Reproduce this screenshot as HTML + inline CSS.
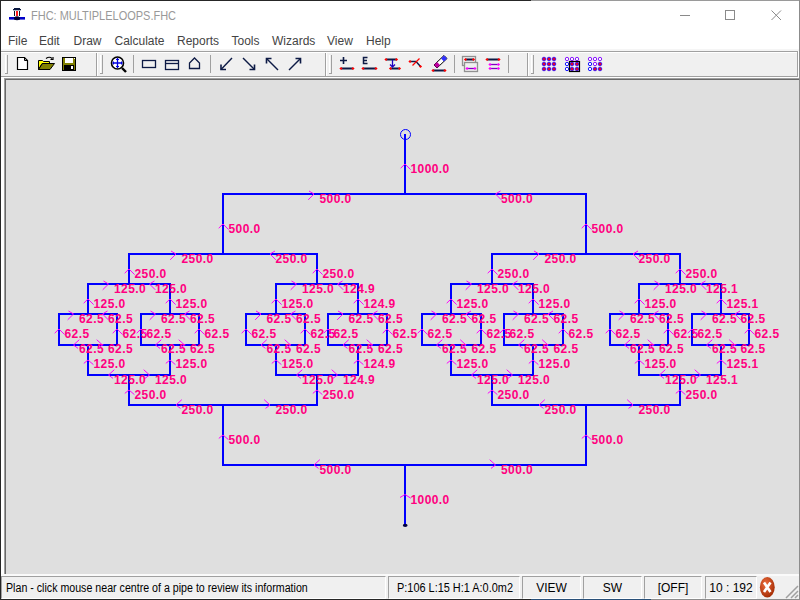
<!DOCTYPE html>
<html><head><meta charset="utf-8"><title>FHC</title>
<style>
html,body{margin:0;padding:0;}
body{width:800px;height:600px;overflow:hidden;position:relative;background:#fff;font-family:"Liberation Sans",sans-serif;}
.a{position:absolute;}
.t{position:absolute;white-space:nowrap;font-size:12px;line-height:14px;}
.menu{color:#444;top:34px;}
.sb{color:#000;top:581px;}
</style></head><body>
<!-- window borders -->
<div class="a" style="left:0;top:0;width:531px;height:1px;background:#262626"></div>
<div class="a" style="left:531px;top:0;width:269px;height:1px;background:#9a9a9a"></div>
<div class="a" style="left:0;top:0;width:1px;height:600px;background:#262626"></div>
<div class="a" style="left:799px;top:0;width:1px;height:600px;background:#8c8c8c"></div>

<!-- title bar -->
<svg class="a" style="left:0;top:0" width="30" height="24" viewBox="0 0 30 24">
 <rect x="14" y="8" width="6" height="1" fill="#0a1840"/>
 <rect x="13" y="9" width="8" height="1.3" fill="#0a1840"/>
 <rect x="14" y="11" width="1" height="5" fill="#0a1020"/>
 <rect x="19" y="11" width="1" height="5" fill="#0a1020"/>
 <rect x="16" y="11" width="2" height="5" fill="#ff1a1a"/>
 <rect x="9" y="17" width="16" height="2.6" fill="#0000c8"/>
 <path d="M14 17.5Q17 15 20 17.5V19.5Q17 21 14 19.5Z" fill="#000030"/>
</svg>
<div class="t" style="left:31px;top:9px;color:#999;transform:scaleX(0.915);transform-origin:0 0">FHC: MULTIPLELOOPS.FHC</div>
<div class="a" style="left:680px;top:15px;width:10px;height:1px;background:#8a8a8a"></div>
<div class="a" style="left:725px;top:10px;width:8px;height:8px;border:1px solid #8a8a8a"></div>
<svg class="a" style="left:770px;top:9px" width="13" height="13" viewBox="0 0 13 13"><path d="M1.5 1.5L11 11M11 1.5L1.5 11" stroke="#8a8a8a" stroke-width="1"/></svg>

<!-- menu -->
<div class="t menu" style="left:8px">File</div>
<div class="t menu" style="left:39px">Edit</div>
<div class="t menu" style="left:73.5px">Draw</div>
<div class="t menu" style="left:114.5px">Calculate</div>
<div class="t menu" style="left:177px">Reports</div>
<div class="t menu" style="left:231.5px">Tools</div>
<div class="t menu" style="left:272px">Wizards</div>
<div class="t menu" style="left:327px">View</div>
<div class="t menu" style="left:366px">Help</div>

<!-- toolbar -->
<div class="a" style="left:1px;top:49px;width:798px;height:2px;background:#f5f5f5"></div>
<div class="a" style="left:1px;top:51px;width:797px;height:1px;background:#a0a0a0"></div>
<div class="a" style="left:1px;top:52px;width:797px;height:24px;background:#f0f0f0;border-top:1px solid #fff"></div>
<div class="a" style="left:797px;top:51px;width:1px;height:26px;background:#a0a0a0"></div>
<div class="a" style="left:1px;top:76px;width:797px;height:1px;background:#a0a0a0"></div>
<div class="a" style="left:1px;top:77px;width:798px;height:1px;background:#fff"></div>
<svg class="a" style="left:0;top:48px" width="800" height="30" viewBox="0 48 800 30">
<rect x="5" y="55" width="1" height="18" fill="#fff"/><rect x="7" y="55" width="1" height="19" fill="#a0a0a0"/><rect x="5" y="73" width="3" height="1" fill="#a0a0a0"/>
<rect x="100" y="55" width="1" height="18" fill="#fff"/><rect x="102" y="55" width="1" height="19" fill="#a0a0a0"/><rect x="100" y="73" width="3" height="1" fill="#a0a0a0"/>
<rect x="329" y="55" width="1" height="18" fill="#fff"/><rect x="331" y="55" width="1" height="19" fill="#a0a0a0"/><rect x="329" y="73" width="3" height="1" fill="#a0a0a0"/>
<rect x="531" y="55" width="1" height="18" fill="#fff"/><rect x="533" y="55" width="1" height="19" fill="#a0a0a0"/><rect x="531" y="73" width="3" height="1" fill="#a0a0a0"/>
<rect x="96" y="53" width="1" height="23" fill="#a0a0a0"/><rect x="97" y="53" width="1" height="23" fill="#fff"/>
<rect x="325" y="53" width="1" height="23" fill="#a0a0a0"/><rect x="326" y="53" width="1" height="23" fill="#fff"/>
<rect x="527" y="53" width="1" height="23" fill="#a0a0a0"/><rect x="528" y="53" width="1" height="23" fill="#fff"/>
<rect x="133" y="55" width="1" height="18" fill="#a0a0a0"/>
<rect x="210" y="55" width="1" height="18" fill="#a0a0a0"/>
<rect x="454" y="55" width="1" height="18" fill="#a0a0a0"/>
<rect x="508" y="55" width="1" height="18" fill="#a0a0a0"/>
<path d="M17.5 57.5H24.5L27.5 60.5V69.5H17.5Z" fill="#fff" stroke="#000" stroke-width="1.2"/><path d="M24.5 58V60.5H27" stroke="#000" stroke-width="1" fill="none"/>
<path d="M38.5 60.5H42.5L43.5 61.5H49.5V63.5H42L38.5 69.5Z" fill="#ffff00" stroke="#000" stroke-width="1"/><path d="M38.5 69.5L42.5 63.5H54.5L50 69.5Z" fill="#808000" stroke="#000" stroke-width="1"/><path d="M46 58.5Q49.5 56 52 58.5" stroke="#000" fill="none" stroke-width="1.2"/><path d="M50.5 59.5H53V57" stroke="#000" fill="none" stroke-width="1.2"/>
<rect x="62" y="57" width="14" height="14" fill="#000"/><rect x="63" y="58" width="12" height="12" fill="#808000"/><rect x="65" y="58" width="8" height="5" fill="#fff"/><rect x="64" y="65" width="10" height="5" fill="#000"/><rect x="71" y="66" width="2" height="3" fill="#fff"/><rect x="74" y="58" width="1" height="1" fill="#fff"/>
<circle cx="117.5" cy="63" r="6" fill="#fff" stroke="#000" stroke-width="1.6"/><path d="M122 68L126 72" stroke="#000" stroke-width="2.4"/><path d="M117.5 58V68M112.5 63H122.5" stroke="#0000e0" stroke-width="1.3"/><path d="M116 59.5H119M116 66.5H119M113.5 61.5V64.5M121.5 61.5V64.5" stroke="#0000e0" stroke-width="1"/>
<rect x="142.5" y="60.5" width="13" height="7" fill="none" stroke="#0d1a45" stroke-width="1.3"/>
<rect x="165.5" y="60.5" width="13" height="9" fill="none" stroke="#0d1a45" stroke-width="1.3"/><path d="M165 63.5H179" stroke="#0d1a45" stroke-width="1.3"/>
<path d="M189.5 68.5V63L194.5 58L199.5 63V68.5Z" fill="none" stroke="#0d1a45" stroke-width="1.3"/>
<path d="M232 58L221 69.5" stroke="#0d1a45" stroke-width="1.4"/><path d="M221 64.5V69.5H226" stroke="#0d1a45" stroke-width="1.6" fill="none"/>
<path d="M243 58L254.5 69.5" stroke="#0d1a45" stroke-width="1.4"/><path d="M254.5 64.5V69.5H249.5" stroke="#0d1a45" stroke-width="1.6" fill="none"/>
<path d="M278 70L266.5 58.5" stroke="#0d1a45" stroke-width="1.4"/><path d="M266.5 63.5V58.5H271.5" stroke="#0d1a45" stroke-width="1.6" fill="none"/>
<path d="M289 70L300.5 58.5" stroke="#0d1a45" stroke-width="1.4"/><path d="M300.5 63.5V58.5H295.5" stroke="#0d1a45" stroke-width="1.6" fill="none"/>
<path d="M340 60.5H347M343.5 57V64" stroke="#0d1a45" stroke-width="1.6"/><rect x="341" y="67.5" width="12" height="2" fill="#0d1a45"/><path d="M339.4 68.5L341 66.9L342.6 68.5L341 70.1Z" fill="#ff0000"/><path d="M351.4 68.5L353 66.9L354.6 68.5L353 70.1Z" fill="#ff0000"/>
<path d="M367.5 57.5H363.5V63.5H367.5M363.5 60.5H367" stroke="#0d1a45" stroke-width="1.5" fill="none"/><rect x="363" y="67.5" width="13" height="2" fill="#0d1a45"/><path d="M361.4 68.5L363 66.9L364.6 68.5L363 70.1Z" fill="#ff0000"/><path d="M374.4 68.5L376 66.9L377.6 68.5L376 70.1Z" fill="#ff0000"/>
<rect x="386" y="58.5" width="10.5" height="2" fill="#0d1a45"/><path d="M384.4 59.5L386 57.9L387.6 59.5L386 61.1Z" fill="#ff0000"/><path d="M394.9 59.5L396.5 57.9L398.1 59.5L396.5 61.1Z" fill="#ff0000"/><rect x="390.5" y="67.5" width="9.0" height="2" fill="#0d1a45"/><path d="M388.9 68.5L390.5 66.9L392.1 68.5L390.5 70.1Z" fill="#ff0000"/><path d="M397.9 68.5L399.5 66.9L401.1 68.5L399.5 70.1Z" fill="#ff0000"/><path d="M392.5 60V67M390 64.5L392.5 67L395 64.5" stroke="#2000c0" stroke-width="1.3" fill="none"/>
<path d="M410 61.5H416L420.5 66.5" stroke="#0d1a45" stroke-width="1.4" fill="none"/><path d="M408.4 61.5L410 59.9L411.6 61.5L410 63.1Z" fill="#ff0000"/><path d="M418.9 66.5L420.5 64.9L422.1 66.5L420.5 68.1Z" fill="#ff0000"/><path d="M412.5 65.5L419.5 58.5" stroke="#ff0000" stroke-width="1.2"/>
<path d="M437 68L434 65L444 55.5L447 58.5Z" fill="#fff" stroke="#000" stroke-width="1"/><path d="M441 58.5L444 55.5L447 58.5L444 61.5Z" fill="#3030ff"/><path d="M437 68L434 65L437 62L440 65Z" fill="#c000a0"/><rect x="433" y="69.5" width="12" height="2" fill="#0d1a45"/><path d="M431.4 70.5L433 68.9L434.6 70.5L433 72.1Z" fill="#ff0000"/><path d="M443.4 70.5L445 68.9L446.6 70.5L445 72.1Z" fill="#ff0000"/>
<rect x="462.5" y="56.5" width="13" height="9" fill="#f0f0f0" stroke="#909090" stroke-width="1.3"/><rect x="465.5" y="58.5" width="8.0" height="2" fill="#0d1a45"/><path d="M463.9 59.5L465.5 57.9L467.1 59.5L465.5 61.1Z" fill="#ff0000"/><path d="M471.9 59.5L473.5 57.9L475.1 59.5L473.5 61.1Z" fill="#ff0000"/><rect x="464.5" y="62.5" width="13" height="9" fill="#f0f0f0" stroke="#909090" stroke-width="1.3"/><rect x="467" y="67.85" width="8" height="1.3" fill="#8000c0"/><path d="M465.4 68.5L467 66.9L468.6 68.5L467 70.1Z" fill="#ff00ff"/><path d="M473.4 68.5L475 66.9L476.6 68.5L475 70.1Z" fill="#ff00ff"/>
<rect x="487" y="58.5" width="12" height="2" fill="#0d1a45"/><path d="M485.4 59.5L487 57.9L488.6 59.5L487 61.1Z" fill="#ff0000"/><path d="M497.4 59.5L499 57.9L500.6 59.5L499 61.1Z" fill="#ff0000"/><rect x="490" y="63.85" width="8.5" height="1.3" fill="#8000c0"/><path d="M488.4 64.5L490 62.9L491.6 64.5L490 66.1Z" fill="#ff00ff"/><path d="M496.9 64.5L498.5 62.9L500.1 64.5L498.5 66.1Z" fill="#ff00ff"/><rect x="490" y="67.85" width="8.5" height="1.3" fill="#8000c0"/><path d="M488.4 68.5L490 66.9L491.6 68.5L490 70.1Z" fill="#ff00ff"/><path d="M496.9 68.5L498.5 66.9L500.1 68.5L498.5 70.1Z" fill="#ff00ff"/>
<circle cx="544" cy="59" r="1.8" fill="#e00030" stroke="#2000ff" stroke-width="0.8"/>
<circle cx="549" cy="59" r="1.8" fill="#e00030" stroke="#2000ff" stroke-width="0.8"/>
<circle cx="554" cy="59" r="1.8" fill="#e00030" stroke="#2000ff" stroke-width="0.8"/>
<circle cx="544" cy="64" r="1.8" fill="#e00030" stroke="#2000ff" stroke-width="0.8"/>
<circle cx="549" cy="64" r="1.8" fill="#e00030" stroke="#2000ff" stroke-width="0.8"/>
<circle cx="554" cy="64" r="1.8" fill="#e00030" stroke="#2000ff" stroke-width="0.8"/>
<circle cx="544" cy="69" r="1.8" fill="#e00030" stroke="#2000ff" stroke-width="0.8"/>
<circle cx="549" cy="69" r="1.8" fill="#e00030" stroke="#2000ff" stroke-width="0.8"/>
<circle cx="554" cy="69" r="1.8" fill="#e00030" stroke="#2000ff" stroke-width="0.8"/>
<circle cx="567" cy="59" r="1.7" fill="#f8f8ff" stroke="#8000ff" stroke-width="0.9"/>
<circle cx="572" cy="59" r="1.7" fill="#f8f8ff" stroke="#8000ff" stroke-width="0.9"/>
<circle cx="577" cy="59" r="1.7" fill="#f8f8ff" stroke="#8000ff" stroke-width="0.9"/>
<circle cx="567" cy="64" r="1.7" fill="#f8f8ff" stroke="#0000ff" stroke-width="0.9"/>
<circle cx="572" cy="64" r="1.8" fill="#e00030" stroke="#2000ff" stroke-width="0.8"/>
<circle cx="577" cy="64" r="1.8" fill="#e00030" stroke="#2000ff" stroke-width="0.8"/>
<circle cx="567" cy="69" r="1.7" fill="#f8f8ff" stroke="#0000ff" stroke-width="0.9"/>
<circle cx="572" cy="69" r="1.8" fill="#e00030" stroke="#2000ff" stroke-width="0.8"/>
<circle cx="577" cy="69" r="1.8" fill="#e00030" stroke="#2000ff" stroke-width="0.8"/>
<rect x="569.5" y="61.5" width="10" height="10" fill="none" stroke="#000" stroke-width="1.2"/>
<circle cx="590" cy="59" r="1.7" fill="#f8f8ff" stroke="#8000ff" stroke-width="0.9"/>
<circle cx="595" cy="59" r="1.7" fill="#f8f8ff" stroke="#8000ff" stroke-width="0.9"/>
<circle cx="600" cy="59" r="1.7" fill="#f8f8ff" stroke="#8000ff" stroke-width="0.9"/>
<circle cx="590" cy="64" r="1.7" fill="#f8f8ff" stroke="#0000ff" stroke-width="0.9"/>
<circle cx="595" cy="64" r="1.7" fill="#f8f8ff" stroke="#8000ff" stroke-width="0.9"/>
<circle cx="600" cy="64" r="1.8" fill="#e00030" stroke="#2000ff" stroke-width="0.8"/>
<circle cx="590" cy="69" r="1.7" fill="#f8f8ff" stroke="#0000ff" stroke-width="0.9"/>
<circle cx="595" cy="69" r="1.8" fill="#e00030" stroke="#2000ff" stroke-width="0.8"/>
<circle cx="600" cy="69" r="1.8" fill="#e00030" stroke="#2000ff" stroke-width="0.8"/>
</svg>

<!-- canvas -->
<div class="a" style="left:1px;top:78px;width:3px;height:496px;background:#fff"></div>
<div class="a" style="left:4px;top:78px;width:795px;height:1px;background:#a0a0a0"></div>
<div class="a" style="left:4px;top:78px;width:1px;height:496px;background:#a0a0a0"></div>
<div class="a" style="left:5px;top:79px;width:794px;height:1px;background:#696969"></div>
<div class="a" style="left:5px;top:79px;width:1px;height:495px;background:#696969"></div>
<div class="a" style="left:6px;top:80px;width:793px;height:494px;background:#dfdfdf"></div>
<svg width="793" height="494" viewBox="6 80 793 494" style="position:absolute;left:6px;top:80px">
<g stroke="#0000ff" stroke-width="2" shape-rendering="crispEdges" fill="none">
<rect x="404" y="134" width="2" height="61" fill="#0000ff" stroke="none"/>
<rect x="222" y="193" width="365" height="2" fill="#0000ff" stroke="none"/>
<rect x="404" y="464" width="2" height="60" fill="#0000ff" stroke="none"/>
<rect x="222" y="464" width="365" height="2" fill="#0000ff" stroke="none"/>
<rect x="222" y="194" width="2" height="60" fill="#0000ff" stroke="none"/>
<rect x="222" y="405" width="2" height="60" fill="#0000ff" stroke="none"/>
<rect x="128" y="253" width="190" height="2" fill="#0000ff" stroke="none"/>
<rect x="128" y="404" width="190" height="2" fill="#0000ff" stroke="none"/>
<rect x="128" y="254" width="2" height="30" fill="#0000ff" stroke="none"/>
<rect x="128" y="375" width="2" height="30" fill="#0000ff" stroke="none"/>
<rect x="87" y="283" width="84" height="2" fill="#0000ff" stroke="none"/>
<rect x="87" y="374" width="84" height="2" fill="#0000ff" stroke="none"/>
<rect x="87" y="284" width="2" height="30" fill="#0000ff" stroke="none"/>
<rect x="87" y="345" width="2" height="30" fill="#0000ff" stroke="none"/>
<rect x="58" y="313" width="60" height="2" fill="#0000ff" stroke="none"/>
<rect x="58" y="344" width="60" height="2" fill="#0000ff" stroke="none"/>
<rect x="58" y="314" width="2" height="31" fill="#0000ff" stroke="none"/>
<rect x="116" y="314" width="2" height="31" fill="#0000ff" stroke="none"/>
<rect x="169" y="284" width="2" height="30" fill="#0000ff" stroke="none"/>
<rect x="169" y="345" width="2" height="30" fill="#0000ff" stroke="none"/>
<rect x="140" y="313" width="60" height="2" fill="#0000ff" stroke="none"/>
<rect x="140" y="344" width="60" height="2" fill="#0000ff" stroke="none"/>
<rect x="140" y="314" width="2" height="31" fill="#0000ff" stroke="none"/>
<rect x="198" y="314" width="2" height="31" fill="#0000ff" stroke="none"/>
<rect x="316" y="254" width="2" height="30" fill="#0000ff" stroke="none"/>
<rect x="316" y="375" width="2" height="30" fill="#0000ff" stroke="none"/>
<rect x="275" y="283" width="84" height="2" fill="#0000ff" stroke="none"/>
<rect x="275" y="374" width="84" height="2" fill="#0000ff" stroke="none"/>
<rect x="275" y="284" width="2" height="30" fill="#0000ff" stroke="none"/>
<rect x="275" y="345" width="2" height="30" fill="#0000ff" stroke="none"/>
<rect x="245" y="313" width="61" height="2" fill="#0000ff" stroke="none"/>
<rect x="245" y="344" width="61" height="2" fill="#0000ff" stroke="none"/>
<rect x="245" y="314" width="2" height="31" fill="#0000ff" stroke="none"/>
<rect x="304" y="314" width="2" height="31" fill="#0000ff" stroke="none"/>
<rect x="357" y="284" width="2" height="30" fill="#0000ff" stroke="none"/>
<rect x="357" y="345" width="2" height="30" fill="#0000ff" stroke="none"/>
<rect x="327" y="313" width="61" height="2" fill="#0000ff" stroke="none"/>
<rect x="327" y="344" width="61" height="2" fill="#0000ff" stroke="none"/>
<rect x="327" y="314" width="2" height="31" fill="#0000ff" stroke="none"/>
<rect x="386" y="314" width="2" height="31" fill="#0000ff" stroke="none"/>
<rect x="585" y="194" width="2" height="60" fill="#0000ff" stroke="none"/>
<rect x="585" y="405" width="2" height="60" fill="#0000ff" stroke="none"/>
<rect x="491" y="253" width="190" height="2" fill="#0000ff" stroke="none"/>
<rect x="491" y="404" width="190" height="2" fill="#0000ff" stroke="none"/>
<rect x="491" y="254" width="2" height="30" fill="#0000ff" stroke="none"/>
<rect x="491" y="375" width="2" height="30" fill="#0000ff" stroke="none"/>
<rect x="450" y="283" width="84" height="2" fill="#0000ff" stroke="none"/>
<rect x="450" y="374" width="84" height="2" fill="#0000ff" stroke="none"/>
<rect x="450" y="284" width="2" height="30" fill="#0000ff" stroke="none"/>
<rect x="450" y="345" width="2" height="30" fill="#0000ff" stroke="none"/>
<rect x="421" y="313" width="61" height="2" fill="#0000ff" stroke="none"/>
<rect x="421" y="344" width="61" height="2" fill="#0000ff" stroke="none"/>
<rect x="421" y="314" width="2" height="31" fill="#0000ff" stroke="none"/>
<rect x="480" y="314" width="2" height="31" fill="#0000ff" stroke="none"/>
<rect x="532" y="284" width="2" height="30" fill="#0000ff" stroke="none"/>
<rect x="532" y="345" width="2" height="30" fill="#0000ff" stroke="none"/>
<rect x="503" y="313" width="61" height="2" fill="#0000ff" stroke="none"/>
<rect x="503" y="344" width="61" height="2" fill="#0000ff" stroke="none"/>
<rect x="503" y="314" width="2" height="31" fill="#0000ff" stroke="none"/>
<rect x="562" y="314" width="2" height="31" fill="#0000ff" stroke="none"/>
<rect x="679" y="254" width="2" height="30" fill="#0000ff" stroke="none"/>
<rect x="679" y="375" width="2" height="30" fill="#0000ff" stroke="none"/>
<rect x="638" y="283" width="84" height="2" fill="#0000ff" stroke="none"/>
<rect x="638" y="374" width="84" height="2" fill="#0000ff" stroke="none"/>
<rect x="638" y="284" width="2" height="30" fill="#0000ff" stroke="none"/>
<rect x="638" y="345" width="2" height="30" fill="#0000ff" stroke="none"/>
<rect x="609" y="313" width="60" height="2" fill="#0000ff" stroke="none"/>
<rect x="609" y="344" width="60" height="2" fill="#0000ff" stroke="none"/>
<rect x="609" y="314" width="2" height="31" fill="#0000ff" stroke="none"/>
<rect x="667" y="314" width="2" height="31" fill="#0000ff" stroke="none"/>
<rect x="720" y="284" width="2" height="30" fill="#0000ff" stroke="none"/>
<rect x="720" y="345" width="2" height="30" fill="#0000ff" stroke="none"/>
<rect x="691" y="313" width="59" height="2" fill="#0000ff" stroke="none"/>
<rect x="691" y="344" width="59" height="2" fill="#0000ff" stroke="none"/>
<rect x="691" y="314" width="2" height="31" fill="#0000ff" stroke="none"/>
<rect x="748" y="314" width="2" height="31" fill="#0000ff" stroke="none"/>
</g>
<circle cx="405.5" cy="134.5" r="5" fill="none" stroke="#0000ff" stroke-width="1"/>
<ellipse cx="405.2" cy="525.3" rx="2.4" ry="1.6" fill="#000040"/>
<g fill="#ff0080" font-family="Liberation Sans, sans-serif" font-weight="bold" font-size="12" letter-spacing="0.4">
<text x="319.5" y="203.0">500.0</text>
<text x="501.0" y="203.0">500.0</text>
<text x="410.5" y="173.0">1000.0</text>
<text x="319.5" y="474.0">500.0</text>
<text x="501.0" y="474.0">500.0</text>
<text x="410.5" y="503.5">1000.0</text>
<text x="228.5" y="233.0">500.0</text>
<text x="228.5" y="444.0">500.0</text>
<text x="181.5" y="263.0">250.0</text>
<text x="275.5" y="263.0">250.0</text>
<text x="181.5" y="414.0">250.0</text>
<text x="275.5" y="414.0">250.0</text>
<text x="134.5" y="278.0">250.0</text>
<text x="134.5" y="399.0">250.0</text>
<text x="114.0" y="293.0">125.0</text>
<text x="155.0" y="293.0">125.0</text>
<text x="114.0" y="384.0">125.0</text>
<text x="155.0" y="384.0">125.0</text>
<text x="93.5" y="308.0">125.0</text>
<text x="93.5" y="368.0">125.0</text>
<text x="79.0" y="323.0">62.5</text>
<text x="108.0" y="323.0">62.5</text>
<text x="79.0" y="353.0">62.5</text>
<text x="108.0" y="353.0">62.5</text>
<text x="64.5" y="338.0">62.5</text>
<text x="122.5" y="338.0">62.5</text>
<text x="175.5" y="308.0">125.0</text>
<text x="175.5" y="368.0">125.0</text>
<text x="161.0" y="323.0">62.5</text>
<text x="190.0" y="323.0">62.5</text>
<text x="161.0" y="353.0">62.5</text>
<text x="190.0" y="353.0">62.5</text>
<text x="146.5" y="338.0">62.5</text>
<text x="204.5" y="338.0">62.5</text>
<text x="322.5" y="278.0">250.0</text>
<text x="322.5" y="399.0">250.0</text>
<text x="302.0" y="293.0">125.0</text>
<text x="343.0" y="293.0">124.9</text>
<text x="302.0" y="384.0">125.0</text>
<text x="343.0" y="384.0">124.9</text>
<text x="281.5" y="308.0">125.0</text>
<text x="281.5" y="368.0">125.0</text>
<text x="266.5" y="323.0">62.5</text>
<text x="296.0" y="323.0">62.5</text>
<text x="266.5" y="353.0">62.5</text>
<text x="296.0" y="353.0">62.5</text>
<text x="251.5" y="338.0">62.5</text>
<text x="310.5" y="338.0">62.5</text>
<text x="363.5" y="308.0">124.9</text>
<text x="363.5" y="368.0">124.9</text>
<text x="348.5" y="323.0">62.5</text>
<text x="378.0" y="323.0">62.5</text>
<text x="348.5" y="353.0">62.5</text>
<text x="378.0" y="353.0">62.5</text>
<text x="333.5" y="338.0">62.5</text>
<text x="392.5" y="338.0">62.5</text>
<text x="591.5" y="233.0">500.0</text>
<text x="591.5" y="444.0">500.0</text>
<text x="544.5" y="263.0">250.0</text>
<text x="638.5" y="263.0">250.0</text>
<text x="544.5" y="414.0">250.0</text>
<text x="638.5" y="414.0">250.0</text>
<text x="497.5" y="278.0">250.0</text>
<text x="497.5" y="399.0">250.0</text>
<text x="477.0" y="293.0">125.0</text>
<text x="518.0" y="293.0">125.0</text>
<text x="477.0" y="384.0">125.0</text>
<text x="518.0" y="384.0">125.0</text>
<text x="456.5" y="308.0">125.0</text>
<text x="456.5" y="368.0">125.0</text>
<text x="442.0" y="323.0">62.5</text>
<text x="471.5" y="323.0">62.5</text>
<text x="442.0" y="353.0">62.5</text>
<text x="471.5" y="353.0">62.5</text>
<text x="427.5" y="338.0">62.5</text>
<text x="486.5" y="338.0">62.5</text>
<text x="538.5" y="308.0">125.0</text>
<text x="538.5" y="368.0">125.0</text>
<text x="524.0" y="323.0">62.5</text>
<text x="553.5" y="323.0">62.5</text>
<text x="524.0" y="353.0">62.5</text>
<text x="553.5" y="353.0">62.5</text>
<text x="509.5" y="338.0">62.5</text>
<text x="568.5" y="338.0">62.5</text>
<text x="685.5" y="278.0">250.0</text>
<text x="685.5" y="399.0">250.0</text>
<text x="665.0" y="293.0">125.0</text>
<text x="706.0" y="293.0">125.1</text>
<text x="665.0" y="384.0">125.0</text>
<text x="706.0" y="384.0">125.1</text>
<text x="644.5" y="308.0">125.0</text>
<text x="644.5" y="368.0">125.0</text>
<text x="630.0" y="323.0">62.5</text>
<text x="659.0" y="323.0">62.5</text>
<text x="630.0" y="353.0">62.5</text>
<text x="659.0" y="353.0">62.5</text>
<text x="615.5" y="338.0">62.5</text>
<text x="673.5" y="338.0">62.5</text>
<text x="726.5" y="308.0">125.1</text>
<text x="726.5" y="368.0">125.1</text>
<text x="712.0" y="323.0">62.5</text>
<text x="740.5" y="323.0">62.5</text>
<text x="712.0" y="353.0">62.5</text>
<text x="740.5" y="353.0">62.5</text>
<text x="697.5" y="338.0">62.5</text>
<text x="754.5" y="338.0">62.5</text>
</g>
<g stroke="#ff00ff" stroke-width="1" fill="none">
<polyline points="309.0,191.0 314.0,194.0 308.2,199.8"/>
<polyline points="500.5,191.0 495.5,194.0 501.3,199.8"/>
<polyline points="400.7,168.2 405.0,164.0 410.6,169.6"/>
<polyline points="319.8,459.7 314.0,465.0 318.5,468.4"/>
<polyline points="489.7,459.7 495.5,465.0 491.0,468.4"/>
<polyline points="400.0,497.5 405.0,494.5 410.8,498.2"/>
<polyline points="218.7,228.2 223.0,224.0 228.6,229.6"/>
<polyline points="218.8,438.4 223.0,435.0 228.4,439.6"/>
<polyline points="171.0,251.0 176.0,254.0 170.2,259.8"/>
<polyline points="275.0,251.0 270.0,254.0 275.8,259.8"/>
<polyline points="181.8,399.7 176.0,405.0 180.5,408.4"/>
<polyline points="264.2,399.7 270.0,405.0 265.5,408.4"/>
<polyline points="124.7,273.2 129.0,269.0 134.6,274.6"/>
<polyline points="124.8,393.4 129.0,390.0 134.4,394.6"/>
<polyline points="103.5,281.0 108.5,284.0 102.7,289.8"/>
<polyline points="154.5,281.0 149.5,284.0 155.3,289.8"/>
<polyline points="114.3,369.7 108.5,375.0 113.0,378.4"/>
<polyline points="143.7,369.7 149.5,375.0 145.0,378.4"/>
<polyline points="83.7,303.2 88.0,299.0 93.6,304.6"/>
<polyline points="83.8,363.4 88.0,360.0 93.4,364.6"/>
<polyline points="68.5,311.0 73.5,314.0 67.7,319.8"/>
<polyline points="107.5,311.0 102.5,314.0 108.3,319.8"/>
<polyline points="79.3,339.7 73.5,345.0 78.0,348.4"/>
<polyline points="96.7,339.7 102.5,345.0 98.0,348.4"/>
<polyline points="54.7,333.2 59.0,329.0 64.6,334.6"/>
<polyline points="112.7,333.2 117.0,329.0 122.6,334.6"/>
<polyline points="165.7,303.2 170.0,299.0 175.6,304.6"/>
<polyline points="165.8,363.4 170.0,360.0 175.4,364.6"/>
<polyline points="150.5,311.0 155.5,314.0 149.7,319.8"/>
<polyline points="189.5,311.0 184.5,314.0 190.3,319.8"/>
<polyline points="161.3,339.7 155.5,345.0 160.0,348.4"/>
<polyline points="178.7,339.7 184.5,345.0 180.0,348.4"/>
<polyline points="136.7,333.2 141.0,329.0 146.6,334.6"/>
<polyline points="194.7,333.2 199.0,329.0 204.6,334.6"/>
<polyline points="312.7,273.2 317.0,269.0 322.6,274.6"/>
<polyline points="312.8,393.4 317.0,390.0 322.4,394.6"/>
<polyline points="291.5,281.0 296.5,284.0 290.7,289.8"/>
<polyline points="342.5,281.0 337.5,284.0 343.3,289.8"/>
<polyline points="302.3,369.7 296.5,375.0 301.0,378.4"/>
<polyline points="331.7,369.7 337.5,375.0 333.0,378.4"/>
<polyline points="271.7,303.2 276.0,299.0 281.6,304.6"/>
<polyline points="271.8,363.4 276.0,360.0 281.4,364.6"/>
<polyline points="256.0,311.0 261.0,314.0 255.2,319.8"/>
<polyline points="295.5,311.0 290.5,314.0 296.3,319.8"/>
<polyline points="266.8,339.7 261.0,345.0 265.5,348.4"/>
<polyline points="284.7,339.7 290.5,345.0 286.0,348.4"/>
<polyline points="241.7,333.2 246.0,329.0 251.6,334.6"/>
<polyline points="300.7,333.2 305.0,329.0 310.6,334.6"/>
<polyline points="353.7,303.2 358.0,299.0 363.6,304.6"/>
<polyline points="353.8,363.4 358.0,360.0 363.4,364.6"/>
<polyline points="338.0,311.0 343.0,314.0 337.2,319.8"/>
<polyline points="377.5,311.0 372.5,314.0 378.3,319.8"/>
<polyline points="348.8,339.7 343.0,345.0 347.5,348.4"/>
<polyline points="366.7,339.7 372.5,345.0 368.0,348.4"/>
<polyline points="323.7,333.2 328.0,329.0 333.6,334.6"/>
<polyline points="382.7,333.2 387.0,329.0 392.6,334.6"/>
<polyline points="581.7,228.2 586.0,224.0 591.6,229.6"/>
<polyline points="581.8,438.4 586.0,435.0 591.4,439.6"/>
<polyline points="534.0,251.0 539.0,254.0 533.2,259.8"/>
<polyline points="638.0,251.0 633.0,254.0 638.8,259.8"/>
<polyline points="544.8,399.7 539.0,405.0 543.5,408.4"/>
<polyline points="627.2,399.7 633.0,405.0 628.5,408.4"/>
<polyline points="487.7,273.2 492.0,269.0 497.6,274.6"/>
<polyline points="487.8,393.4 492.0,390.0 497.4,394.6"/>
<polyline points="466.5,281.0 471.5,284.0 465.7,289.8"/>
<polyline points="517.5,281.0 512.5,284.0 518.3,289.8"/>
<polyline points="477.3,369.7 471.5,375.0 476.0,378.4"/>
<polyline points="506.7,369.7 512.5,375.0 508.0,378.4"/>
<polyline points="446.7,303.2 451.0,299.0 456.6,304.6"/>
<polyline points="446.8,363.4 451.0,360.0 456.4,364.6"/>
<polyline points="431.5,311.0 436.5,314.0 430.7,319.8"/>
<polyline points="471.0,311.0 466.0,314.0 471.8,319.8"/>
<polyline points="442.3,339.7 436.5,345.0 441.0,348.4"/>
<polyline points="460.2,339.7 466.0,345.0 461.5,348.4"/>
<polyline points="417.7,333.2 422.0,329.0 427.6,334.6"/>
<polyline points="476.7,333.2 481.0,329.0 486.6,334.6"/>
<polyline points="528.7,303.2 533.0,299.0 538.6,304.6"/>
<polyline points="528.8,363.4 533.0,360.0 538.4,364.6"/>
<polyline points="513.5,311.0 518.5,314.0 512.7,319.8"/>
<polyline points="553.0,311.0 548.0,314.0 553.8,319.8"/>
<polyline points="524.3,339.7 518.5,345.0 523.0,348.4"/>
<polyline points="542.2,339.7 548.0,345.0 543.5,348.4"/>
<polyline points="499.7,333.2 504.0,329.0 509.6,334.6"/>
<polyline points="558.7,333.2 563.0,329.0 568.6,334.6"/>
<polyline points="675.7,273.2 680.0,269.0 685.6,274.6"/>
<polyline points="675.8,393.4 680.0,390.0 685.4,394.6"/>
<polyline points="654.5,281.0 659.5,284.0 653.7,289.8"/>
<polyline points="705.5,281.0 700.5,284.0 706.3,289.8"/>
<polyline points="665.3,369.7 659.5,375.0 664.0,378.4"/>
<polyline points="694.7,369.7 700.5,375.0 696.0,378.4"/>
<polyline points="634.7,303.2 639.0,299.0 644.6,304.6"/>
<polyline points="634.8,363.4 639.0,360.0 644.4,364.6"/>
<polyline points="619.5,311.0 624.5,314.0 618.7,319.8"/>
<polyline points="658.5,311.0 653.5,314.0 659.3,319.8"/>
<polyline points="630.3,339.7 624.5,345.0 629.0,348.4"/>
<polyline points="647.7,339.7 653.5,345.0 649.0,348.4"/>
<polyline points="605.7,333.2 610.0,329.0 615.6,334.6"/>
<polyline points="663.7,333.2 668.0,329.0 673.6,334.6"/>
<polyline points="716.7,303.2 721.0,299.0 726.6,304.6"/>
<polyline points="716.8,363.4 721.0,360.0 726.4,364.6"/>
<polyline points="701.5,311.0 706.5,314.0 700.7,319.8"/>
<polyline points="740.0,311.0 735.0,314.0 740.8,319.8"/>
<polyline points="712.3,339.7 706.5,345.0 711.0,348.4"/>
<polyline points="729.2,339.7 735.0,345.0 730.5,348.4"/>
<polyline points="687.7,333.2 692.0,329.0 697.6,334.6"/>
<polyline points="744.7,333.2 749.0,329.0 754.6,334.6"/>
</g></svg>

<!-- status bar -->
<div class="a" style="left:1px;top:574px;width:798px;height:25px;background:#f0f0f0"></div>
<div class="a" style="left:1px;top:574px;width:798px;height:2px;background:#fafafa"></div>
<div class="a" style="left:1px;top:576px;width:383px;height:21px;border-top:1px solid #a0a0a0;border-left:1px solid #a0a0a0;border-right:1px solid #fff;border-bottom:1px solid #fff;background:#f0f0f0"></div>
<div class="t sb" style="left:6px;transform:scaleX(0.887);transform-origin:0 0">Plan - click mouse near centre of a pipe to review its information</div>
<div class="a" style="left:388px;top:576px;width:130px;height:21px;border-top:1px solid #a0a0a0;border-left:1px solid #a0a0a0;border-right:1px solid #fff;border-bottom:1px solid #fff;background:#f0f0f0"></div>
<div class="t sb" style="left:397px;transform:scaleX(0.91);transform-origin:0 0">P:106 L:15 H:1 A:0.0m2</div>
<div class="a" style="left:522px;top:576px;width:57px;height:21px;border-top:1px solid #a0a0a0;border-left:1px solid #a0a0a0;border-right:1px solid #fff;border-bottom:1px solid #fff;background:#f0f0f0"></div>
<div class="t sb" style="left:522px;width:59px;text-align:center">VIEW</div>
<div class="a" style="left:583px;top:576px;width:57px;height:21px;border-top:1px solid #a0a0a0;border-left:1px solid #a0a0a0;border-right:1px solid #fff;border-bottom:1px solid #fff;background:#f0f0f0"></div>
<div class="t sb" style="left:583px;width:59px;text-align:center">SW</div>
<div class="a" style="left:644px;top:576px;width:56px;height:21px;border-top:1px solid #a0a0a0;border-left:1px solid #a0a0a0;border-right:1px solid #fff;border-bottom:1px solid #fff;background:#f0f0f0"></div>
<div class="t sb" style="left:644px;width:58px;text-align:center">[OFF]</div>
<div class="a" style="left:705px;top:576px;width:50px;height:21px;border-top:1px solid #a0a0a0;border-left:1px solid #a0a0a0;border-right:1px solid #fff;border-bottom:1px solid #fff;background:#f0f0f0"></div>
<div class="t sb" style="left:705px;width:52px;text-align:center">10 : 192</div>
<svg class="a" style="left:758px;top:576px" width="42" height="23" viewBox="758 576 42 23">
<defs><radialGradient id="rg" cx="0.4" cy="0.35" r="0.7"><stop offset="0" stop-color="#f07040"/><stop offset="1" stop-color="#a02800"/></radialGradient></defs>
<ellipse cx="767.3" cy="587.3" rx="7.4" ry="10.2" fill="url(#rg)"/>
<path d="M764 582.5L770.5 592M770.5 582.5L764 592" stroke="#fff" stroke-width="2.6"/>
<path d="M786 598L798 586M791 598L798 591M795 598L798 595" stroke="#a0a0a0" stroke-width="1.5"/>
</svg>
<div class="a" style="left:0;top:599px;width:531px;height:1px;background:#262626"></div>
<div class="a" style="left:531px;top:599px;width:120px;height:1px;background:#2a5078"></div>
<div class="a" style="left:651px;top:599px;width:149px;height:1px;background:#8c8c8c"></div>
</body></html>
